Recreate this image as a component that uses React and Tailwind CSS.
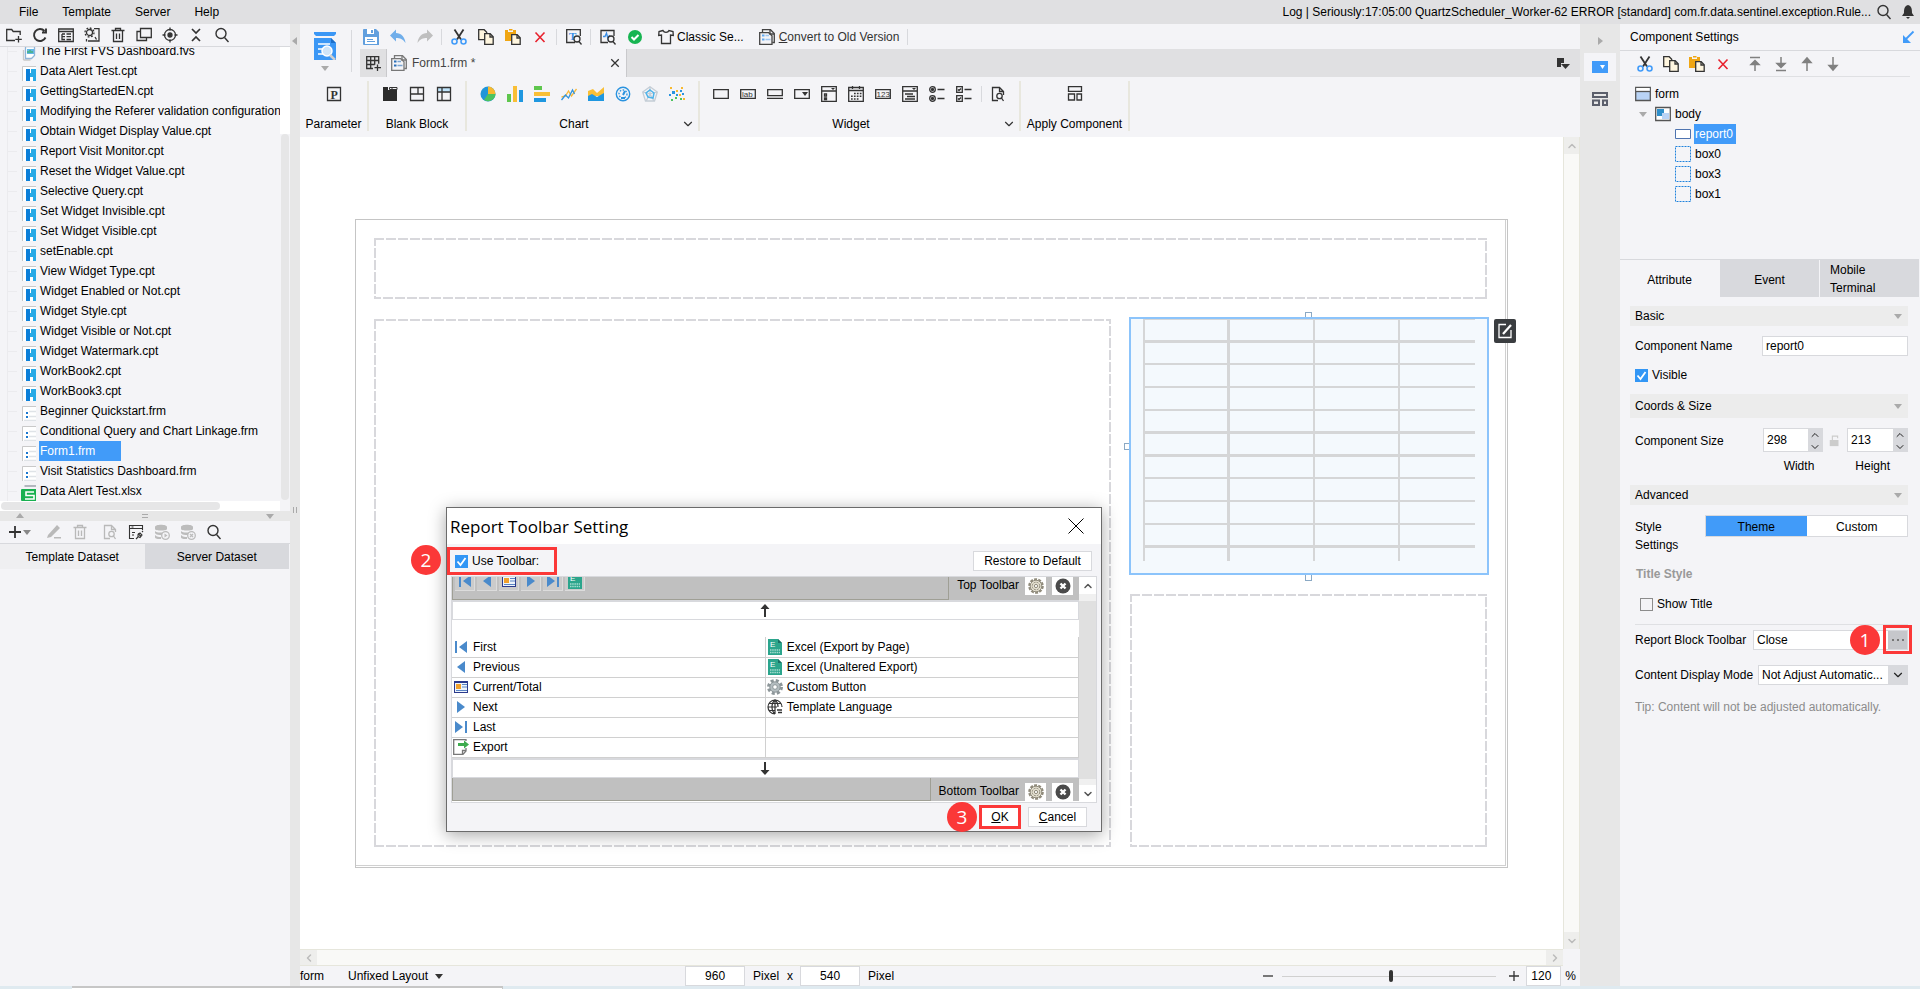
import { ChevronDown, ChevronLeft, ChevronRight, ChevronUp } from 'lucide-react'

const FILES = [
  { name: 'The First FVS Dashboard.fvs', type: 'fvs' },
  { name: 'Data Alert Test.cpt', type: 'cpt' },
  { name: 'GettingStartedEN.cpt', type: 'cpt' },
  { name: 'Modifying the Referer validation configuration.cpt', type: 'cpt' },
  { name: 'Obtain Widget Display Value.cpt', type: 'cpt' },
  { name: 'Report Visit Monitor.cpt', type: 'cpt' },
  { name: 'Reset the Widget Value.cpt', type: 'cpt' },
  { name: 'Selective Query.cpt', type: 'cpt' },
  { name: 'Set Widget Invisible.cpt', type: 'cpt' },
  { name: 'Set Widget Visible.cpt', type: 'cpt' },
  { name: 'setEnable.cpt', type: 'cpt' },
  { name: 'View Widget Type.cpt', type: 'cpt' },
  { name: 'Widget Enabled or Not.cpt', type: 'cpt' },
  { name: 'Widget Style.cpt', type: 'cpt' },
  { name: 'Widget Visible or Not.cpt', type: 'cpt' },
  { name: 'Widget Watermark.cpt', type: 'cpt' },
  { name: 'WorkBook2.cpt', type: 'cpt' },
  { name: 'WorkBook3.cpt', type: 'cpt' },
  { name: 'Beginner Quickstart.frm', type: 'frm' },
  { name: 'Conditional Query and Chart Linkage.frm', type: 'frm' },
  { name: 'Form1.frm', type: 'frm', selected: true },
  { name: 'Visit Statistics Dashboard.frm', type: 'frm' },
  { name: 'Data Alert Test.xlsx', type: 'xlsx' },
]

function Svg({ size = 16, children, ...rest }) {
  return (
    <svg
      width={size}
      height={size}
      viewBox="0 0 16 16"
      fill="none"
      stroke="#333333"
      strokeWidth="1.3"
      className="shrink-0"
      aria-hidden="true"
      {...rest}
    >
      {children}
    </svg>
  )
}

// file type icons
const FILE_ICONS = {
  fvs: (
    <Svg>
      <path d="M2.500 15V5M2.500 15h7" stroke="#c8c8c8" />
      <path d="M4.500 1.500h9v9l-3 3h-6z" fill="#fff" stroke="#8fb4d8" />
      <path d="M6 4h7v5H6z" fill="#63b7e6" stroke="none" />
      <path d="M7 8V6M9 8V5M11 8V6" stroke="#3fae6d" />
    </Svg>
  ),
  cpt: (
    <Svg>
      <path d="M1 2h14v14H1z" fill="#fff" stroke="none" />
      <path d="M1.500 16V1.500H15" stroke="#c9c9c9" strokeWidth="1" />
      <path d="M5 4h4v12H5z" fill="#0b7fd8" stroke="none" />
      <path d="M10 4h5v12h-3v-4H9V8h1z" fill="#26a9e6" stroke="none" />
    </Svg>
  ),
  frm: (
    <Svg>
      <path d="M1 2h14v14H1z" fill="#fff" stroke="none" />
      <path d="M1.500 16V1.500H15" stroke="#c9c9c9" strokeWidth="1" />
      <path d="M5 7h2v2H5zM5 11h2v2H5z" fill="#1a78d0" stroke="none" />
      <path d="M8 6.500h7M8 11.500h7M3 15.500h12" stroke="#dfe3e7" />
    </Svg>
  ),
  xlsx: (
    <Svg>
      <path d="M3.500 1H15" stroke="#8f97a0" />
      <path d="M1 4h14v12H1a1 1 0 0 1-1-1V5a1 1 0 0 1 1-1z" fill="#18b050" stroke="none" />
      <path d="M13 7H5v3.500h8V14H4" stroke="#fff" strokeWidth="1.600" />
    </Svg>
  ),
}

// icons shared between the toolbars
const ScissorsIcon = () => (
  <Svg>
    <path d="M3.500 0.500l6.500 10M12.500 0.500L6 10.500" strokeWidth="1.800" />
    <circle cx="3.500" cy="12.500" r="2.500" stroke="#419bf9" strokeWidth="1.600" />
    <circle cx="12.500" cy="12.500" r="2.500" stroke="#419bf9" strokeWidth="1.600" />
  </Svg>
)

const CopyIcon = () => (
  <Svg>
    <path d="M0.700 0.700h5.500l2.500 2.500v7.500h-8z" fill="#fff6df" />
    <path d="M6.700 4.700h5.500l3 3v7.600H6.700z" fill="#fff6df" />
    <path d="M12 5v3h3" />
  </Svg>
)

const PasteIcon = () => (
  <Svg>
    <path d="M0 1h3v2h5V1h3v4H6v7H0z" fill="#f0a613" stroke="none" />
    <path d="M4 0h3.500v1.500H4z" fill="#f0a613" stroke="none" />
    <path d="M6.700 5.700h5.500l3 3v6.600H6.700z" fill="#fff6df" />
    <path d="M12 6v3h3" />
  </Svg>
)

const DeleteIcon = () => (
  <Svg>
    <path d="M3.500 3.500l9 9.500M12.500 3.500l-9 9.500" stroke="#e8222e" strokeWidth="1.600" />
  </Svg>
)

const SearchIcon = () => (
  <Svg strokeWidth="1.400">
    <circle cx="7" cy="6.500" r="5" />
    <path d="M10.500 10.500l4 4.500" />
  </Svg>
)

const FormIcon = ({ accent = '#63a9f0', color = '#444' }) => (
  <Svg stroke={color}>
    <path d="M3.500 3V0.700h8l3.800 3.800v9h-2" />
    <path d="M0.700 3.700h9l3.300 3v8.600H0.700z" fill="#f4f4f7" />
    <path d="M11 1v4h4" />
    <path d="M3 6.500h2.500M3 10.500h2.500" stroke={accent} strokeWidth="2" />
    <path d="M6.500 6.500H10M6.500 10.500h5" stroke={accent} strokeWidth="1.400" opacity="0.600" />
  </Svg>
)

const TrashIcon = ({ stroke = '#333' }) => (
  <Svg stroke={stroke}>
    <path d="M1.500 3.500h13M5.500 3V1.500h5V3M3.500 4v10.500h9V4M6.500 6.500V12M9.500 6.500V12" />
  </Svg>
)

const GearIcon = ({ stroke = '#8f8a7a', fill = '#e4e0d0' }) => (
  <Svg stroke={stroke}>
    <circle cx="8" cy="8" r="6.800" strokeWidth="2" strokeDasharray="3 1.270" />
    <circle cx="8" cy="8" r="5.800" fill={fill} strokeWidth="1" />
    <circle cx="8" cy="8" r="3.800" strokeWidth="1" strokeDasharray="2 1" />
    <circle cx="8" cy="8" r="1.600" fill="#fff" strokeWidth="1" />
  </Svg>
)

const CogIcon = () => (
  <Svg stroke="#8d9699">
    <circle cx="8" cy="8" r="6.500" strokeWidth="3" strokeDasharray="3 2.100" />
    <circle cx="8" cy="8" r="5.200" fill="#b4bdc0" strokeWidth="1" />
    <circle cx="8" cy="8" r="2.300" fill="#fff" strokeWidth="1" />
  </Svg>
)

const CloseBadgeIcon = () => (
  <Svg>
    <circle cx="8" cy="8" r="7.500" fill="#4a4a4a" stroke="none" />
    <path d="M5.500 5.500l5 5M10.500 5.500l-5 5" stroke="#fff" strokeWidth="2.400" />
  </Svg>
)

const ExcelIcon = () => (
  <Svg stroke="none">
    <path d="M1 0h10l4 4v12H1z" fill="#2ba58c" />
    <path d="M11 0l4 4h-4z" fill="#1c6e63" />
    <text x="3" y="8" fontSize="8" fontFamily="Liberation Sans" fill="#fff">E</text>
    <path d="M3 11h10M3 13.500h10" stroke="#a5dccf" strokeDasharray="1.500 0.700" />
  </Svg>
)

const PrevIcon = () => (
  <Svg stroke="none"><path d="M12 2v12L4 8z" fill="#4a8acb" /></Svg>
)
const NextIcon = () => (
  <Svg stroke="none"><path d="M4 2v12l8-6z" fill="#4a8acb" /></Svg>
)
const FirstIcon = () => (
  <Svg stroke="none">
    <path d="M2 2h2v12H2zM14 2v12L6 8z" fill="#4a8acb" />
  </Svg>
)
const LastIcon = () => (
  <Svg stroke="none">
    <path d="M12 2h2v12h-2zM2 2v12l8-6z" fill="#4a8acb" />
  </Svg>
)
const PageIcon = () => (
  <Svg stroke="none">
    <path d="M1 2h14v12H1z" fill="#2b3a8c" />
    <path d="M2 4h12v9H2z" fill="#eef4fb" />
    <path d="M3 5h5v5H3z" fill="#f0a02c" />
    <path d="M9 5.500h5M9 8h5M3 11.500h11" stroke="#5a84c4" strokeWidth="1" />
  </Svg>
)
const ExportIcon = () => (
  <Svg stroke="#777">
    <path d="M13 9v3l-3 3.300H0.700V0.700H13V2" fill="#fff" />
    <path d="M13 11.500H9.500V15" />
    <path d="M5 4h6V1.500L16 5.500l-5 4V7H5z" fill="#3dab4e" stroke="none" />
  </Svg>
)
const GlobeIcon = () => (
  <Svg strokeWidth="1.200">
    <path d="M15 8A7 7 0 1 0 8 15M8 1v14M1 8h9M2.500 4.500h11M2.500 11.500H8M8 1c-4 3-4 11 0 14M8 1c2 1.500 3 4 3 7" />
    <path d="M10 11h5M11 13.500h4" strokeWidth="1.500" />
  </Svg>
)

const FILE_TOOLS = [
  <Svg key="new"><path d="M9 13.500H0.700V2.500h5l1.500 2h7V8M12.500 9v6.500M9.300 12.300h6.500" /></Svg>,
  <Svg key="refresh" strokeWidth="1.900"><path d="M13.500 10.500A6 6 0 1 1 12.500 4M14 1.500V5.500h-4" /></Svg>,
  <Svg key="detail"><path d="M0.700 2h14.600v12.500H0.700zM0.700 4.500h14.600M4 7h3M4 7v5.500h3M4 9.700h3M8.500 7H13M8.500 9.700H13M8.500 12.500H13" /></Svg>,
  <Svg key="config">
    <circle cx="5.500" cy="5.500" r="3" />
    <circle cx="5.500" cy="5.500" r="4.500" strokeDasharray="1.800 1.700" />
    <path d="M10 1.700h5V14H7M2.500 12v2.500M11 10l1.500 2.500M4 14h4" />
  </Svg>,
  <TrashIcon key="trash" />,
  <Svg key="dup"><path d="M4.500 1.500h10.800v9H4.500zM4 4.500H1v9h9.500V11" /></Svg>,
  <Svg key="target">
    <circle cx="8" cy="8" r="5.500" />
    <circle cx="8" cy="8" r="2" fill="#333" />
    <path d="M8 0.500v3M8 12.500v3M0.500 8h3M12.500 8h3" />
  </Svg>,
  <Svg key="collapse" strokeWidth="1.700"><path d="M4 2l4 4 4-4M4 14l4-4 4 4" /></Svg>,
  <SearchIcon key="search" />,
]

const MAIN_TOOLS = [
  <Svg key="save" stroke="none">
    <path d="M0 1a1 1 0 0 1 1-1h12l3 3v13H1a1 1 0 0 1-1-1z" fill="#619fde" />
    <path d="M4 0h7v5H4zM2 8h12v7H2z" fill="#fff" />
    <path d="M8 1h2v3H8zM4 10h6v1H4zM4 12h8v1H4z" fill="#619fde" />
  </Svg>,
  <Svg key="undo"><path d="M6 0.500V4c5 0 9 4 9.500 10C13 10 10 9 6 9v3.500L0 6.500z" fill="#70aeea" stroke="none" /></Svg>,
  <Svg key="redo"><path d="M10 0.500V4C5 4 1 8 0.500 14 3 10 6 9 10 9v3.500l6-6z" fill="#bfbfbf" stroke="none" /></Svg>,
  null,
  <ScissorsIcon key="cut" />,
  <CopyIcon key="copy" />,
  <PasteIcon key="paste" />,
  <DeleteIcon key="delete" />,
  null,
  <Svg key="preview">
    <path d="M9 13.500H0.700V0.700h13.600V7" />
    <text x="3" y="11" fontSize="11" fontFamily="Liberation Serif" fontWeight="bold" fill="#3b8fe8" stroke="none">T</text>
    <circle cx="11" cy="10" r="3" fill="#f4f4f7" />
    <path d="M13 12.500l2.500 3" />
  </Svg>,
  null,
  <Svg key="monitor">
    <path d="M8 13.500H1V1.500h13V7" />
    <path d="M3 7.500h2L6.500 4 8 10l1.500-4" stroke="#3b8fe8" />
    <circle cx="11" cy="10" r="3" fill="#f4f4f7" />
    <path d="M13 12.500l2.500 3" />
  </Svg>,
  <Svg key="check" stroke="none">
    <circle cx="8" cy="8" r="7" fill="#17b552" />
    <path d="M4.500 8l2.500 2.500 4.500-4.500" stroke="#fff" strokeWidth="2" />
  </Svg>,
]

const BLOCK_ICONS = [
  <Svg key="tab" stroke="none"><path d="M1 1h5v3h9v11H1z" fill="#2b2b2b" /><path d="M7.500 1.500H15v2H7.500zM10 1v3" stroke="#333" strokeWidth="1" /></Svg>,
  <Svg key="split"><path d="M1.500 1.500h13v13h-13zM1.500 8h13M9 1.500V8" /></Svg>,
  <Svg key="abs"><path d="M2 2h12v4H2z" fill="#bfe3fa" stroke="none" /><path d="M1.500 1.500h13v13h-13zM1.500 6h13M6 1.500v13" /></Svg>,
]

const CHART_ICONS = [
  <Svg key="pie" stroke="none">
    <circle cx="8" cy="8" r="7.500" fill="#2196d8" />
    <path d="M8 8V0.500A7.500 7.500 0 0 1 15.500 8z" fill="#f7b92f" />
    <path d="M8 8h7.500A7.500 7.500 0 0 1 4 14z" fill="#4cc35e" />
  </Svg>,
  <Svg key="col" stroke="none">
    <path d="M0 8h4v8H0z" fill="#5ec64d" /><path d="M6 0h4v16H6z" fill="#f9bf36" /><path d="M12 4h4v12h-4z" fill="#1f97e0" />
  </Svg>,
  <Svg key="bar" stroke="none">
    <path d="M0 0h8v4H0z" fill="#5ec64d" /><path d="M0 6h16v4H0z" fill="#f9bf36" /><path d="M0 12h12v4H0z" fill="#1f97e0" />
  </Svg>,
  <Svg key="line">
    <path d="M0.500 11l4-1 3-5 3 5 5-7" stroke="#f9b93a" />
    <path d="M0.500 14l4-5 3 3 4-8 2 4" stroke="#2f93df" />
  </Svg>,
  <Svg key="area" stroke="none">
    <path d="M0 5l5-2 4 4 7-6v9H0z" fill="#f9bf36" /><path d="M0 10l4-2 5 3 7-4v8H0z" fill="#1f97e0" />
  </Svg>,
  <Svg key="gauge" stroke="#2a93df">
    <circle cx="8" cy="8" r="6.700" strokeWidth="1.400" />
    <circle cx="8" cy="8" r="4" strokeDasharray="1.500 1.500" />
    <path d="M8 9l2-4M6 12h4" strokeWidth="2" />
  </Svg>,
  <Svg key="radar" stroke="#c4cdd6">
    <path d="M8 0.700L15.300 6l-2.800 9h-9L0.700 6zM8 0.700V8M15 6L8 8M12 15L8 8M4 15l4-7M1 6l7 2" />
    <path d="M8 4l4 3-1 5-5-1-2-4z" stroke="#4db3ea" strokeWidth="1.500" />
  </Svg>,
  <Svg key="scatter" stroke="none">
    <path d="M1 1h2v2H1zM7 4h2v2H7zM12 1h2v2h-2zM10 8h2v2h-2zM14 12h2v2h-2z" fill="#f7b92f" />
    <path d="M3 5h3v3H3zM11 4h2v2h-2zM7 8h2v2H7zM13 7h2v2h-2zM0 8h2v2H0z" fill="#2a93df" />
    <path d="M2 13h2v2H2zM6 11h2v2H6zM11 12h2v2h-2z" fill="#4cc35e" />
  </Svg>,
]

const WIDGET_ICONS = [
  <Svg key="text"><path d="M0.700 3.700h14.600v8.600H0.700z" /></Svg>,
  <Svg key="label">
    <path d="M0.700 3.700h14.600v8.600H0.700z" />
    <text x="2" y="11" fontSize="8" fontFamily="Liberation Sans" fill="#333" stroke="none">lab</text>
  </Svg>,
  <Svg key="button"><path d="M0.700 3.700h14.600v6H0.700zM0 12.300h16" /></Svg>,
  <Svg key="combo"><path d="M0.700 3.700h14.600v8.600H0.700z" /><path d="M8 6h6l-3 4z" fill="#333" stroke="none" /></Svg>,
  <Svg key="list"><path d="M0.700 0.700h14.600v14.600H0.700zM0.700 5h14.600M3.500 8h2v2h-2zM3.500 12h2v1.500h-2z" /><path d="M10 2h4l-2 2z" fill="#333" stroke="none" /></Svg>,
  <Svg key="date">
    <path d="M0.700 1.500h14.600v13.800H0.700zM0.700 4.500h14.600M4.500 0v3M11.500 0v3" />
    <path d="M6 7.500h7.500M3 10.300h10.500M3 13h7.500" strokeWidth="1.600" strokeDasharray="1.700 1.200" />
  </Svg>,
  <Svg key="number">
    <path d="M0.700 3.700h14.600v8.600H0.700z" />
    <text x="1.500" y="11" fontSize="8" fontFamily="Liberation Sans" fill="#333" stroke="none">123</text>
  </Svg>,
  <Svg key="tree"><path d="M0.700 0.700h14.600v14.600H0.700zM0.700 5h14.600M3 8h8M5 10.500h8M3 13h10" /><path d="M10 2h4l-2 2z" fill="#333" stroke="none" /></Svg>,
  <Svg key="radio">
    <circle cx="3.500" cy="3.500" r="2.800" /><circle cx="3.500" cy="3.500" r="1" fill="#333" />
    <circle cx="3.500" cy="12.500" r="2.800" /><circle cx="3.500" cy="12.500" r="1" fill="#333" />
    <path d="M8.500 3.500h7M8.500 12.500h7" />
  </Svg>,
  <Svg key="checks">
    <path d="M0.700 0.700h5.600v5.600H0.700zM0.700 9.700h5.600v5.600H0.700zM2 3.500l1 1 2-2M2 12.500l1 1 2-2M8.500 3.500h7M8.500 12.500h7" />
  </Svg>,
  null,
  <Svg key="query">
    <path d="M8 14.500H2.500V1.500h7l4 4V9M9.500 1.500v4h4" />
    <circle cx="9.500" cy="10" r="2.700" />
    <path d="M11.500 12l2 3" />
  </Svg>,
]

const DATASET_TOOLS = [
  <Svg key="edit" stroke="none"><path d="M2 11L11 1l3 3L5 13l-4 1zM8 13h7v1.500H8z" fill="#b9b9b9" /></Svg>,
  <TrashIcon key="trash" stroke="#b9b9b9" />,
]
const DATASET_TOOLS_2 = [
  <Svg key="preview" stroke="#b9b9b9">
    <path d="M8 14.500H2.500V1.500h7l4 4V8M9.500 1.500v4h4" />
    <circle cx="9.500" cy="10" r="2.700" />
    <path d="M11.500 12l2 3" />
  </Svg>,
  <Svg key="conn" strokeWidth="1.100">
    <path d="M6 14.500H1.500V1.500h13V6M1.500 4.500h13M4 8.500h3M4 11h2M3.500 3h2" />
    <path d="M8 15l2-2M14 8l1-1M10 9.500l3 3M10 10.500l2-1.500 2 2-2 2.500-2-1z" />
  </Svg>,
  <Svg key="run" stroke="none">
    <path d="M1 3c0-3 12-3 12 0v2c0 2-12 2-12 0zM1 7c2 2 8 2 12 0v2l-5 2c-3 0-6 0-7-2zM1 11c2 2 4 2 6 2v2c-3 0-6 0-6-2z" fill="#bcbcbc" />
    <circle cx="11.500" cy="11.500" r="3.800" fill="#f4f4f7" stroke="#bcbcbc" />
    <path d="M10.500 9.500v4l3-2z" fill="#bcbcbc" />
  </Svg>,
  <Svg key="clear" stroke="none">
    <path d="M1 3c0-3 12-3 12 0v2c0 2-12 2-12 0zM1 7c2 2 8 2 12 0v2l-5 2c-3 0-6 0-7-2zM1 11c2 2 4 2 6 2v2c-3 0-6 0-6-2z" fill="#bcbcbc" />
    <circle cx="11.500" cy="11.500" r="3.800" fill="#f4f4f7" stroke="#bcbcbc" />
    <path d="M10 10l3 3M13 10l-3 3" stroke="#bcbcbc" />
  </Svg>,
  <SearchIcon key="search" />,
]

const MOVE_ICONS = [
  'M8 5v10M3 1.500h10M4 8.500l4-4 4 4z',
  'M8 1v10M3 14.500h10M4 7.500l4 4 4-4z',
  'M8 3v12M4 6.500L8 2l4 4.500z',
  'M8 1v12M4 9.500L8 14l4-4.500z',
]

const Triangle = ({ dir = 'down', color = '#aaaaaa' }) => {
  const d = { down: 'M0 2h8L4 7z', up: 'M0 6h8L4 1z', left: 'M6 0v8L1 4z', right: 'M2 0v8l5-4z' }[dir]
  return (
    <svg width="8" height="8" viewBox="0 0 8 8" className="shrink-0" aria-hidden="true">
      <path d={d} fill={color} />
    </svg>
  )
}

const Divider = () => <span className="h-4 w-px bg-[#d8d9dd]" />

function IconButton({ children, className = 'w-[27px]' }) {
  return <button className={`flex h-5 items-center justify-center ${className}`}>{children}</button>
}

// Row of icon buttons, null entries become dividers
function ToolRow({ items }) {
  return (
    <div className="flex items-center">
      {items.map((item, i) =>
        item ? (
          <IconButton key={i}>{item}</IconButton>
        ) : (
          <span key={i} className="flex w-[7px] justify-center"><Divider /></span>
        )
      )}
    </div>
  )
}

function Checkbox({ label, checked }) {
  return (
    <label className="flex items-center gap-1">
      <span className="relative size-[13px]">
        <input
          type="checkbox"
          defaultChecked={checked}
          className="peer block size-[13px] appearance-none border border-[#8c8c8c] bg-[#f4f4f7] checked:border-[#3296f5] checked:bg-[#3296f5]"
        />
        <svg viewBox="0 0 13 13" fill="none" className="pointer-events-none absolute inset-0 hidden peer-checked:block" aria-hidden="true">
          <path d="M2.500 6.500l3 3.500 5-7" stroke="#fff" strokeWidth="1.800" />
        </svg>
      </span>
      {label}
    </label>
  )
}

function StepBadge({ n, className }) {
  return (
    <span
      className={`absolute flex size-[30px] items-center justify-center rounded-full bg-[#fb3838] font-['Open_Sans',sans-serif] text-[19px] leading-none text-white ${className}`}
    >
      {n}
    </span>
  )
}

function MenuBar() {
  return (
    <header className="flex h-6 shrink-0 items-center bg-[#e0e0e2] pl-[19px]">
      <nav className="flex gap-6">
        <button>File</button>
        <button>Template</button>
        <button>Server</button>
        <button>Help</button>
      </nav>
      <span className="mr-px ml-auto truncate">
        Log | Seriously:17:05:00 QuartzScheduler_Worker-62 ERROR [standard] com.fr.data.sentinel.exception.Rule...
      </span>
      <IconButton className="w-6"><SearchIcon /></IconButton>
      <IconButton className="w-6">
        <Svg stroke="none"><path d="M8 1c4 1 4 5 4 8l2 3H2l2-3c0-3 0-7 4-8zM6 13h4l-2 2z" fill="#333" /></Svg>
      </IconButton>
    </header>
  )
}

function FileRow({ file }) {
  return (
    <li className="flex h-5 items-center">
      <span className="ml-[7px] h-5 w-px shrink-0 bg-[#ebebee]" />
      <span className="mr-1 h-px w-[9px] shrink-0 bg-[#ebebee]" />
      <span className="flex h-5 shrink-0 items-end">{FILE_ICONS[file.type]}</span>
      <span
        className={
          file.selected
            ? 'ml-0.5 h-5 w-[82px] bg-[#419bf9] pl-px leading-5 text-white'
            : 'ml-[3px] leading-5 whitespace-nowrap'
        }
      >
        {file.name}
      </span>
    </li>
  )
}

function Sidebar() {
  return (
    <aside className="flex w-[290px] shrink-0 flex-col">
      <div className="flex h-[23px] items-center border-b border-[#d8d9dd] pl-px">
        {FILE_TOOLS.map((icon, i) => (
          <IconButton key={i} className="w-[26px]">{icon}</IconButton>
        ))}
      </div>
      <div className="flex h-[454px]">
        <ul className="flex min-w-0 flex-1 flex-col justify-end overflow-hidden">
          {FILES.map((file) => (
            <FileRow key={file.name} file={file} />
          ))}
        </ul>
        <div className="flex w-[10px] shrink-0 flex-col justify-end bg-white">
          <div className="h-[367px] bg-[#f4f4f7] px-px">
            <div className="h-[366px] rounded-md bg-[#e6e6e7]" />
          </div>
        </div>
      </div>
      <div className="mr-[10px] h-[10px] bg-white p-px">
        <div className="h-2 w-[219px] rounded bg-[#e6e6e7]" />
      </div>
      <div className="flex h-[10px] items-center justify-between bg-[#e7e7e7] px-4">
        <Triangle dir="up" />
        <span className="h-1 w-[6px] border-y border-[#aaaaaa]" />
        <Triangle />
      </div>
      <div className="flex h-[23px] items-center border-b border-[#d8d9dd] pl-[7px]">
        <button className="flex w-6 items-center" aria-label="Add dataset">
          <Svg strokeWidth="1.800"><path d="M2 8h12M8 2v12" /></Svg>
          <Triangle color="#888888" />
        </button>
        <span className="mr-0.5 ml-2"><Divider /></span>
        {DATASET_TOOLS.map((icon, i) => (
          <IconButton key={i} className="w-[26px]">{icon}</IconButton>
        ))}
        <span className="mr-0.5 ml-0.5"><Divider /></span>
        {DATASET_TOOLS_2.map((icon, i) => (
          <IconButton key={i} className="w-[26px]">{icon}</IconButton>
        ))}
      </div>
      <div className="mr-px grid h-[25px] grid-cols-2">
        <button className="bg-[#efeff1]">Template Dataset</button>
        <button className="bg-[#d8d9dd]">Server Dataset</button>
      </div>
    </aside>
  )
}

function PaletteGroup({ label, items, width, more }) {
  return (
    <section className={`flex h-[50px] flex-col items-center justify-between border-r-2 border-[#e8e7de] pt-[3px] ${width}`}>
      <ToolRow items={items} />
      <div className="flex h-[15px] w-full items-center">
        <span className="flex-1 text-center whitespace-nowrap">{label}</span>
        {more && (
          <button aria-label={`More ${label}`} className="w-[17px]">
            <ChevronDown size={14} strokeWidth={2} color="#333" />
          </button>
        )}
      </div>
    </section>
  )
}

function EditorHeader() {
  return (
    <>
      <div className="flex h-[53px]">
        <div className="flex w-[57px] items-center justify-between pr-[5px] pl-[14px]">
          <button className="mt-[3px] flex flex-col items-center gap-1" aria-label="Preview">
            <svg width="22" height="28" viewBox="0 0 22 28" aria-hidden="true">
              <path d="M0 0h22v2l-2 2H2L0 2zM0 6h17l5 5v17H0z" fill="#3b97f5" />
              <path d="M17 6l5 5h-5z" fill="#1d6fc9" />
              <path d="M4 12h12M4 17h7M4 22h5" stroke="#fff" strokeWidth="1.500" />
              <circle cx="13" cy="19" r="5" fill="#cfe4f8" stroke="#fff" strokeWidth="1.500" />
              <path d="M16 23l5 5" stroke="#cfcfcf" strokeWidth="2.500" />
            </svg>
            <Triangle />
          </button>
          <span className="h-[42px] w-px bg-[#d8d9dd]" />
        </div>
        <div className="flex min-w-0 flex-1 flex-col">
          <div className="flex h-[25px] items-center">
            <ToolRow items={MAIN_TOOLS} />
            <button className="ml-[10px] flex items-center gap-[3px]">
              <Svg><path d="M5 1.500L1 2.500l-0.300 4L3.500 6v8.500h9V6l2.800 0.500-0.300-4-4-1c-1 2.500-5 2.500-6 0z" /></Svg>
              Classic Se...
            </button>
            <button className="mr-2 ml-[15px] flex items-center gap-1 text-[#333333]">
              <FormIcon />
              <span><u>C</u>onvert to Old Version</span>
            </button>
            <Divider />
          </div>
          <div className="ml-[3px] flex h-7 items-stretch bg-[#e0e0e2]">
            <button className="flex w-[26px] items-center justify-center" aria-label="New template">
              <Svg><path d="M8 13.500H1.700V1.700h12v7M1.700 5.500h12M1.700 9.500h8M5.700 1.700v12M9.700 1.700v8M12.500 9.500v6.500M9.500 12.700h6.500" /></Svg>
            </button>
            <div className="flex w-[241px] items-center border-x border-[#c9c9cc] bg-[#f4f4f7] pr-[6px] pl-1 text-[#444444]">
              <FormIcon accent="#2a6fb8" color="#777" />
              <span className="ml-[5px] flex-1">Form1.frm *</span>
              <button aria-label="Close tab">
                <Svg size={10} strokeWidth="2"><path d="M2 2l12 12M14 2L2 14" /></Svg>
              </button>
            </div>
            <button className="mr-[9px] ml-auto" aria-label="Tab list">
              <Svg><path d="M2 3h7v5H6v4H2z" fill="#333" stroke="none" /><path d="M6 9h9l-4.500 5z" fill="#333" stroke="none" /></Svg>
            </button>
          </div>
        </div>
      </div>
      <div className="flex h-[60px] pt-1">
        <PaletteGroup
          label="Parameter"
          width="w-[69px]"
          items={[
            <Svg key="p">
              <path d="M1.500 1.500h13v13h-13z" />
              <text x="4.500" y="12.500" fontSize="12" fontFamily="Liberation Serif" fontWeight="bold" fill="#333" stroke="none">P</text>
            </Svg>,
          ]}
        />
        <PaletteGroup label="Blank Block" width="w-[98px]" items={BLOCK_ICONS} />
        <PaletteGroup label="Chart" width="w-[233px]" items={CHART_ICONS} more />
        <PaletteGroup label="Widget" width="w-[321px]" items={WIDGET_ICONS} more />
        <PaletteGroup
          label="Apply Component"
          width="w-[109px]"
          items={[
            <Svg key="apply"><path d="M1.500 0.700h13v4.600h-13zM1.500 8h6v6h-6zM10 8h4.500v6H10z" /></Svg>,
          ]}
        />
      </div>
    </>
  )
}

// Grid preview of the report block, line positions and thickness in canvas pixels
const GRID_X = [[12, 2], [96, 3], [182, 2], [267, 2]]
const GRID_Y = [[0, 1], [21, 3], [44, 2], [67, 2], [90, 2], [112, 3], [135, 3], [158, 2], [181, 2], [204, 2], [226, 3]]

function ReportPreview() {
  return (
    <svg width="356" height="254" fill="#d5d6d7" aria-hidden="true">
      {GRID_Y.map(([y, h]) => (
        <rect key={y} x="12" y={y} width="332" height={h} />
      ))}
      {GRID_X.map(([x, w]) => (
        <rect key={x} x={x} y="0" width={w} height="242" />
      ))}
    </svg>
  )
}

function DashedBox({ className }) {
  return (
    <div className={`absolute ${className}`}>
      <svg width="100%" height="100%" aria-hidden="true">
        <rect width="100%" height="100%" fill="none" stroke="#d8d8dc" strokeWidth="4" strokeDasharray="10 2" />
      </svg>
    </div>
  )
}

function FormCanvas() {
  return (
    <div className="flex flex-1 items-center justify-center overflow-hidden bg-white">
      <div className="relative h-[649px] w-[1153px] shrink-0 border border-[#c5c5c5]">
        <div className="absolute inset-0 mr-px mb-px border-r border-b border-[#d0d0d0]" />
        <DashedBox className="top-[18px] left-[18px] h-[61px] w-[1113px]" />
        <DashedBox className="top-[99px] left-[18px] h-[528px] w-[737px]" />
        <DashedBox className="top-[374px] left-[774px] h-[253px] w-[357px]" />
        <div className="absolute top-[97px] left-[773px] h-[258px] w-[360px] border-2 border-[#8cc4fb] bg-[#f4f9fd]">
          <ReportPreview />
          <span className="absolute -top-[7px] left-[174px] h-[5px] w-[7px] border border-b-0 border-[#8ba9c4] bg-white" />
          <span className="absolute -bottom-[8px] left-[174px] h-[6px] w-[7px] border border-t-0 border-[#8ba9c4] bg-white" />
          <span className="absolute top-[124px] -left-[7px] h-[7px] w-[5px] border border-r-0 border-[#8ba9c4] bg-white" />
        </div>
        <button
          aria-label="Edit block"
          className="absolute top-[99px] left-[1138px] flex h-6 w-[22px] items-center justify-center rounded-xs bg-[#3a3d40]"
        >
          <Svg stroke="#fff"><path d="M9 1.500H2v13h12V7" /><path d="M6 11l8-9" strokeWidth="2.200" /></Svg>
        </button>
      </div>
    </div>
  )
}

function SizeInput({ label, value }) {
  return (
    <input
      aria-label={label}
      defaultValue={value}
      className="h-5 w-[60px] border border-[#d8d9dd] bg-white text-center"
    />
  )
}

function StatusBar() {
  return (
    <footer className="flex h-5 shrink-0 items-center">
      <span>form</span>
      <button className="ml-6 flex items-center gap-[7px]">
        Unfixed Layout <Triangle color="#333333" />
      </button>
      <div className="ml-[242px] flex items-center">
        <SizeInput label="Form width" value="960" />
        <span className="mx-2">Pixel</span>
        <span className="mr-[7px]">x</span>
        <SizeInput label="Form height" value="540" />
        <span className="ml-2">Pixel</span>
      </div>
      <div className="ml-auto flex items-center">
        <button aria-label="Zoom out"><Svg><path d="M3 8h10" /></Svg></button>
        <div className="relative mx-[6px] flex h-4 w-[214px] items-center">
          <input
            type="range"
            aria-label="Zoom"
            min="0"
            max="100"
            defaultValue="51"
            className="h-px w-full appearance-none bg-[#d0d0d0] [&::-webkit-slider-thumb]:h-3 [&::-webkit-slider-thumb]:w-1 [&::-webkit-slider-thumb]:appearance-none [&::-webkit-slider-thumb]:rounded-xs [&::-webkit-slider-thumb]:bg-[#333333]"
          />
        </div>
        <button className="ml-1" aria-label="Zoom in"><Svg><path d="M3 8h10M8 3v10" /></Svg></button>
        <input aria-label="Zoom percent" defaultValue="120" className="mr-1 ml-1 h-5 w-[35px] border border-[#d8d9dd] bg-white pl-1" />
        <span className="mr-1">%</span>
      </div>
    </footer>
  )
}

function Editor() {
  return (
    <main className="flex min-w-0 flex-1 flex-col">
      <EditorHeader />
      <div className="flex min-h-0 flex-1">
        <FormCanvas />
        <div className="flex w-[17px] flex-col justify-between border-x border-[#e6e6dc] bg-[#f9f9f7]">
          <button className="flex h-[17px] items-center justify-center bg-[#eeeeec]" aria-label="Scroll up"><ChevronUp size={12} strokeWidth={3} color="#bbb" /></button>
          <button className="flex h-[17px] items-center justify-center bg-[#eeeeec]" aria-label="Scroll down"><ChevronDown size={12} strokeWidth={3} color="#bbb" /></button>
        </div>
      </div>
      <div className="mr-[17px] flex h-[17px] shrink-0 justify-between border-y border-[#e6e6dc] bg-[#f9f9f7]">
        <button className="flex w-[17px] items-center justify-center bg-[#eeeeec]" aria-label="Scroll left"><ChevronLeft size={12} strokeWidth={3} color="#bbb" /></button>
        <button className="flex w-[17px] items-center justify-center bg-[#eeeeec]" aria-label="Scroll right"><ChevronRight size={12} strokeWidth={3} color="#bbb" /></button>
      </div>
      <StatusBar />
    </main>
  )
}

function SectionTitle({ children, tall }) {
  return (
    <h3 className={`flex items-center justify-between bg-[#ececec] pr-[6px] pl-[5px] ${tall ? 'h-6' : 'h-5'}`}>
      {children}
      <Triangle />
    </h3>
  )
}

function Spinner({ label, value, width }) {
  return (
    <span className={`flex h-6 border border-[#d8d9dd] ${width}`}>
      <input aria-label={label} defaultValue={value} className="min-w-0 flex-1 bg-white pl-[3px]" />
      <span className="flex w-[14px] flex-col items-center justify-around bg-[#d8d9dd]">
        <button aria-label={`Increase ${label}`}><ChevronUp size={12} color="#222" /></button>
        <button aria-label={`Decrease ${label}`}><ChevronDown size={12} color="#222" /></button>
      </span>
    </span>
  )
}

const BOXES = ['box0', 'box3', 'box1']

function ComponentTree() {
  return (
    <ul className="h-[182px] pt-[7px] leading-5">
      <li className="flex h-5 items-center gap-1 pl-[15px]">
        <Svg><path d="M0.700 1.500h14.600v13H0.700z" fill="#b9d3f5" stroke="#555" /><path d="M1.300 2h13.400v3H1.300z" fill="#fff" stroke="none" /><path d="M1 5.500h14" stroke="#555" /></Svg>
        form
      </li>
      <li className="flex h-5 items-center pl-[19px]">
        <Triangle />
        <span className="mr-1 ml-2">
          <Svg><path d="M0.700 1.500h14.600v13H0.700z" fill="#fff" stroke="#555" /><path d="M2 3h7v7H2z" fill="#2f8fca" stroke="none" /><path d="M7 7h7v6H7z" fill="#b9d3f5" stroke="none" /></Svg>
        </span>
        body
      </li>
      <li className="flex h-5 items-center gap-[3px] pl-[55px]">
        <Svg><path d="M0.500 3.500h15v9H0.500z" fill="#fff" stroke="#4f74b0" strokeWidth="1" /></Svg>
        <span className="bg-[#419bf9] pr-[3px] pl-px text-white">report0</span>
      </li>
      {BOXES.map((box) => (
        <li key={box} className="flex h-5 items-center gap-1 pl-[55px]">
          <Svg><path d="M0.500 0.500h15v15H0.500z" stroke="#1f82dc" strokeWidth="1" strokeDasharray="2 1" /></Svg>
          {box}
        </li>
      ))}
    </ul>
  )
}

function SettingsPanel() {
  return (
    <aside className="w-[300px] shrink-0">
      <div className="flex h-[27px] items-center justify-between border-b border-[#d8d9dd] pr-1 pl-[10px]">
        <h2>Component Settings</h2>
        <Svg><path d="M13.500 2.500L6 10" stroke="#419bf9" strokeWidth="1.800" /><path d="M3 6v8h8z" fill="#419bf9" stroke="none" /></Svg>
      </div>
      <div className="mr-[10px] ml-[10px] flex h-[26px] items-center border-b border-[#dfe0e3] pl-[2px]">
        {[<ScissorsIcon />, <CopyIcon />, <PasteIcon />, <DeleteIcon />].map((icon, i) => (
          <IconButton key={i} className="w-[26px]">{icon}</IconButton>
        ))}
        <span className="mr-[3px] ml-[3px]"><Divider /></span>
        {MOVE_ICONS.map((d) => (
          <IconButton key={d} className="w-[26px]">
            <Svg stroke="#808080" fill="#808080" strokeWidth="1.500"><path d={d} /></Svg>
          </IconButton>
        ))}
      </div>
      <ComponentTree />
      <div className="mr-px grid h-[37px] grid-cols-3 gap-px border-t border-[#d8d9dd]">
        <button className="bg-[#f4f4f7] pt-[3px]">Attribute</button>
        <button className="bg-[#d8d9dd] pt-[3px]">Event</button>
        <button className="bg-[#d8d9dd] pt-px pr-8 pl-[10px] text-left leading-[18px]">Mobile Terminal</button>
      </div>

      <div className="flex flex-col pt-[10px] pr-3 pl-[10px]">
        <SectionTitle>Basic</SectionTitle>
        <div className="mt-[10px] flex h-5 items-center justify-between pl-[5px]">
          <label htmlFor="component-name">Component Name</label>
          <input id="component-name" defaultValue="report0" className="h-5 w-[146px] border border-[#d8d9dd] bg-white pl-[3px]" />
        </div>
        <div className="mt-[9px] mb-[9px] flex h-5 items-center pl-[5px]">
          <Checkbox label="Visible" checked />
        </div>
        <SectionTitle tall>Coords & Size</SectionTitle>
        <div className="mt-[10px] flex h-6 items-center pl-[5px]">
          <span className="flex-1 pt-[2px]">Component Size</span>
          <Spinner label="Width" value="298" width="w-[60px]" />
          <span className="flex w-6 justify-center">
            <Svg size={14} stroke="#cccccc"><path d="M5 8V3.500h6V6" /><path d="M2 8h10v7H2z" fill="#cccccc" stroke="none" /></Svg>
          </span>
          <Spinner label="Height" value="213" width="w-[61px]" />
        </div>
        <div className="mt-[6px] mb-[11px] flex h-4 justify-end gap-[41px] pr-[18px]">
          <span>Width</span>
          <span>Height</span>
        </div>
        <SectionTitle>Advanced</SectionTitle>
        <div className="mt-[10px] flex justify-between pl-[5px]">
          <span className="mt-[3px] w-[60px] leading-[18px]">Style Settings</span>
          <div className="grid h-[22px] w-[203px] grid-cols-2 border border-[#d8d9dd] bg-white">
            <button className="bg-[#419bf9] pt-px">Theme</button>
            <button className="pt-px">Custom</button>
          </div>
        </div>
        <h4 className="mt-3 h-4 pl-[6px] font-bold text-[#999999]">Title Style</h4>
        <div className="mt-3 flex h-5 items-center pl-[10px]">
          <Checkbox label="Show Title" />
        </div>
        <div className="mt-[10px] ml-[5px] border-t border-[#dfe0e3]" />
        <div className="relative mt-[5px] flex h-5 items-center justify-between pl-[5px]">
          <label htmlFor="block-toolbar">Report Block Toolbar</label>
          <span className="flex h-5 w-[155px] border border-[#d8d9dd]">
            <input id="block-toolbar" defaultValue="Close" className="min-w-0 flex-1 bg-white pl-[3px]" />
            <button className="flex w-[19px] items-center justify-center bg-[#c6c7cb]" aria-label="Edit toolbar">
              <Svg stroke="none" fill="#777777"><path d="M2 7h2v2H2zM7 7h2v2H7zM12 7h2v2h-2z" /></Svg>
            </button>
          </span>
          <span className="pointer-events-none absolute -top-[5px] -right-1 size-[29px] border-3 border-[#fb3838]" />
          <StepBadge n="1" className="-top-[5px] right-7" />
        </div>
        <div className="mt-[15px] flex h-5 items-center justify-between pl-[5px]">
          <label htmlFor="display-mode">Content Display Mode</label>
          <span className="relative">
            <select id="display-mode" className="block h-5 w-[150px] appearance-none border border-[#d8d9dd] bg-white pr-5 pl-[3px] leading-[18px]">
              <option>Not Adjust Automatic...</option>
            </select>
            <span className="pointer-events-none absolute top-0 right-0 flex size-5 items-center justify-center bg-[#d8d9dd]">
              <ChevronDown size={14} color="#222" />
            </span>
          </span>
        </div>
        <p className="mt-[14px] pl-[5px] leading-4 text-[#8c8c8c]">Tip: Content will not be adjusted automatically.</p>
      </div>
    </aside>
  )
}

const TOOL_ROWS = [
  [<FirstIcon />, 'First', <ExcelIcon />, 'Excel (Export by Page)'],
  [<PrevIcon />, 'Previous', <ExcelIcon />, 'Excel (Unaltered Export)'],
  [<PageIcon />, 'Current/Total', <CogIcon />, 'Custom Button'],
  [<NextIcon />, 'Next', <GlobeIcon />, 'Template Language'],
  [<LastIcon />, 'Last'],
  [<ExportIcon />, 'Export'],
]

function ToolbarTarget({ label, width, children, align }) {
  return (
    <div className={`flex h-[23px] shrink-0 bg-[#c0c0c0] ${align}`}>
      <div className="flex h-[23px] flex-1 items-start gap-[2px] overflow-hidden border-r border-b border-l border-[#9f9f95] pl-[2px]">
        {children}
      </div>
      <div className={`flex justify-end gap-[6px] pr-[6px] ${width}`}>
        <span className="leading-4">{label}</span>
        <button className="flex h-[18px] w-[21px] items-center justify-center bg-white" aria-label={`${label} settings`}><GearIcon /></button>
        <button className="flex h-[18px] w-[21px] items-center justify-center bg-white" aria-label={`Clear ${label}`}><CloseBadgeIcon /></button>
      </div>
    </div>
  )
}

function ToolbarDialog() {
  return (
    <div
      role="dialog"
      aria-label="Report Toolbar Setting"
      className="absolute top-[507px] left-[446px] flex h-[325px] w-[656px] flex-col border border-[#6b6b6b] bg-[#f4f4f7] shadow-[0_3px_16px_rgba(0,0,0,0.35)]"
    >
      <div className="flex h-9 items-center justify-between bg-white pr-[17px] pl-[3px]">
        <h2 className="font-['Open_Sans',sans-serif] text-[17px] leading-none">Report Toolbar Setting</h2>
        <button aria-label="Close">
          <Svg stroke="#000" strokeWidth="1"><path d="M0.500 0.500l15 15M15.500 0.500l-15 15" /></Svg>
        </button>
      </div>
      <div className="mt-[2px] flex h-[30px] items-center justify-between pr-[9px]">
        <div className="flex h-7 w-[110px] items-center border-3 border-[#fb3838] pl-[5px]">
          <Checkbox label="Use Toolbar:" checked />
        </div>
        <button className="h-5 w-[119px] border border-[#d8d9dd] bg-white">Restore to Default</button>
      </div>
      <div className="mr-1 ml-1 flex h-[227px] border border-[#d8d9dd]">
        <div className="flex flex-1 flex-col overflow-hidden bg-white">
          <ToolbarTarget label="Top Toolbar" width="w-[130px]" align="items-start">
            {[<FirstIcon />, <PrevIcon />, <PageIcon />, <NextIcon />, <LastIcon />, <ExcelIcon />].map((icon, i) => (
              <button key={i} className="flex h-[14px] w-5 items-end justify-center border-r border-b border-[#dcdcdc] bg-[#cbcbcb] pb-px">{icon}</button>
            ))}
          </ToolbarTarget>
          <button className="flex h-5 items-center justify-center border border-t-2 border-[#d8d9dd] pr-[2px]" aria-label="Add to top toolbar">
            <Svg stroke="#333" strokeWidth="2"><path d="M8 4v10" /><path d="M3.500 6L8 1l4.500 5z" fill="#333" stroke="none" /></Svg>
          </button>
          <table className="mt-[17px] w-full border-collapse">
            <tbody>
              {TOOL_ROWS.map(([icon, name, icon2, name2]) => (
                <tr key={name} className="h-5 border-b border-[#d0d0d0]">
                  <td className="w-1/2 p-0 pl-px">
                    <div className="flex h-[19px] items-center gap-1">{icon}{name}</div>
                  </td>
                  <td className="border-x border-[#d0d0d0] p-0 pl-px">
                    <div className="flex h-[19px] items-center gap-1">{icon2}{name2}</div>
                  </td>
                </tr>
              ))}
            </tbody>
          </table>
          <button className="flex h-5 shrink-0 items-center justify-center border border-t-2 border-[#d8d9dd] pr-[2px]" aria-label="Add to bottom toolbar">
            <Svg stroke="#333" strokeWidth="2"><path d="M8 2v10" /><path d="M3.500 10L8 15l4.500-5z" fill="#333" stroke="none" /></Svg>
          </button>
          <ToolbarTarget label="Bottom Toolbar" width="w-[148px]" align="items-end" />
        </div>
        <div className="flex w-[17px] flex-col items-center justify-between bg-[#f0f0f0]">
          <button className="flex h-[17px] w-full items-center justify-center bg-white" aria-label="Scroll up"><ChevronUp size={12} strokeWidth={3} color="#555" /></button>
          <div className="h-[178px] w-full bg-[#e0e0e0]" />
          <button className="flex h-[17px] w-full items-center justify-center bg-white" aria-label="Scroll down"><ChevronDown size={12} strokeWidth={3} color="#555" /></button>
        </div>
      </div>
      <div className="flex h-7 items-center justify-end gap-[7px] pr-[14px]">
        <button className="h-6 w-[42px] border-3 border-[#fb3838] bg-white leading-none"><u>O</u>K</button>
        <button className="h-5 w-[59px] border border-[#d8d9dd] bg-white leading-none"><u>C</u>ancel</button>
      </div>
      <StepBadge n="2" className="top-[37px] -left-9" />
      <StepBadge n="3" className="right-[124px] -bottom-px" />
    </div>
  )
}

export default function App() {
  return (
    <div className="relative flex h-screen flex-col overflow-hidden bg-[#f4f4f7] font-['Liberation_Sans',sans-serif] text-[12px] leading-4 text-black">
      <MenuBar />
      <div className="flex min-h-0 flex-1">
        <Sidebar />
        <div className="flex w-[10px] shrink-0 flex-col items-center bg-[#e7e7e7] pt-[13px]">
          <Triangle dir="left" />
          <span className="mt-[462px] h-[6px] w-1 border-x border-[#aaaaaa]" />
        </div>
        <Editor />
        <div className="flex w-10 shrink-0 flex-col items-center bg-[#e7e7e7] pt-[13px]">
          <Triangle dir="right" />
          <button className="mt-2 flex h-7 w-8 items-center justify-center bg-[#f4f4f7]" aria-label="Component settings">
            <Svg stroke="none"><path d="M0 2h16v12H0z" fill="#419bf9" /><path d="M8 6h5l-2.500 4z" fill="#fff" /></Svg>
          </button>
          <button className="mt-[10px]" aria-label="Component library">
            <Svg stroke="#5b5f6b" strokeWidth="2"><path d="M1 2h14v4H1zM1 9.500h6V14H1zM11 9.500h4V14h-4z" /></Svg>
          </button>
        </div>
        <SettingsPanel />
      </div>
      <div className="flex h-[3px] shrink-0 bg-[#dfeaf0]">
        <div className="ml-[72px] w-[431px] border-t-2 border-r border-[#c6c6c6] bg-white" />
      </div>
      <ToolbarDialog />
    </div>
  )
}
